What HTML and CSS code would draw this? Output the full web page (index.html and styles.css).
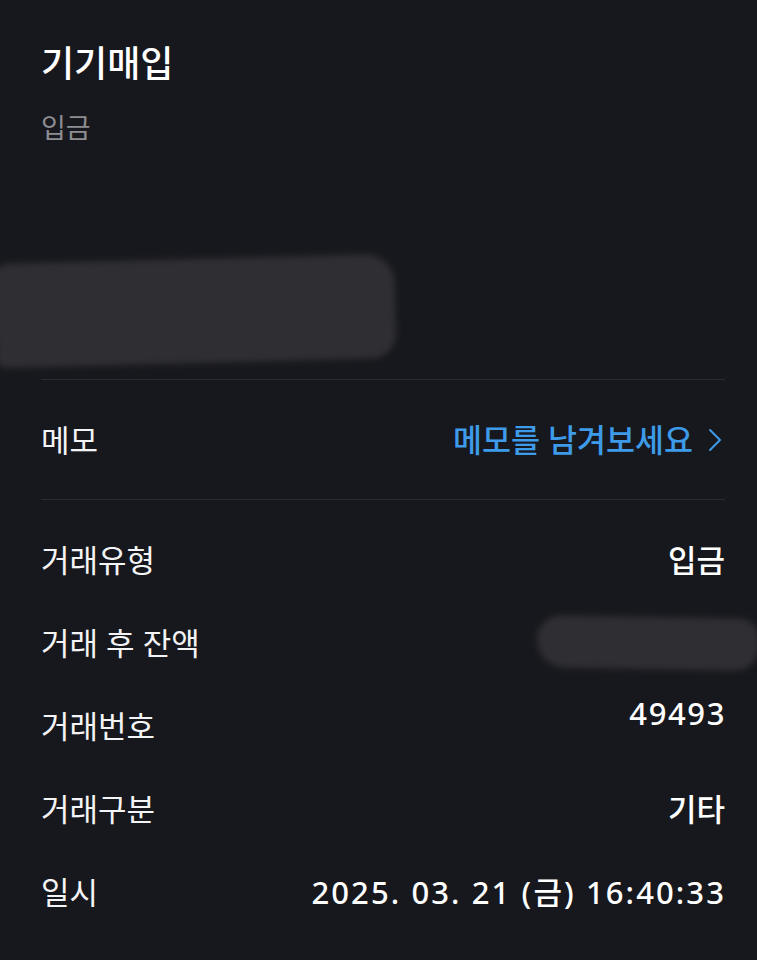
FILE: index.html
```html
<!DOCTYPE html>
<html lang="ko">
<head>
<meta charset="utf-8">
<link rel="stylesheet" href="styles.css">
</head>
<body>
<main class="page">
  <header class="head">
    <h1 class="title">기기매입</h1>
    <p class="subtitle">입금</p>
    <div class="redact redact-amount"></div>
  </header>
  <div class="memo">
    <span class="label">메모</span>
    <a class="memo-link">메모를 남겨보세요
      <svg class="chev" viewBox="0 0 16 26" width="16" height="26"><path d="M3 3 L13 13 L3 23" fill="none" stroke="#3d9be9" stroke-width="2" stroke-linecap="round" stroke-linejoin="round"/></svg>
    </a>
  </div>
  <ul class="rows">
    <li class="row"><span class="label">거래유형</span><span class="value">입금</span></li>
    <li class="row"><span class="label">거래 후 잔액</span><div class="redact redact-balance"></div></li>
    <li class="row"><span class="label">거래번호</span><span class="value num value-high">49493</span></li>
    <li class="row"><span class="label">거래구분</span><span class="value">기타</span></li>
    <li class="row"><span class="label">일시</span><span class="value num date">2025. 03. 21 (금) 16:40:33</span></li>
  </ul>
</main>
</body>
</html>
```
FILE: styles.css
```css
html, body {
  margin: 0;
  padding: 0;
  background: #17181d;
}
body {
  font-family: "Noto Sans", "Noto Sans CJK KR", sans-serif;
  color: #f4f4f6;
  overflow: hidden;
}
.page {
  padding: 0 32px 0 41px;
}
.head {
  padding-top: 40px;
}
.title {
  margin: 0;
  font-size: 36px;
  line-height: 48px;
  font-weight: 500;
  color: #ffffff;
}
.subtitle {
  margin: 20px 0 0;
  font-size: 27px;
  line-height: 40px;
  color: #8d8d92;
}
.redact {
  background: #2f2f33;
  filter: blur(3px);
}
.redact-amount {
  margin: 111px 0 16px -46px;
  width: 400px;
  height: 104px;
  border-radius: 14px 28px 24px 10px;
  transform: rotate(-1.5deg);
}
.memo {
  border-top: 1px solid #2b2c31;
  border-bottom: 1px solid #2b2c31;
  height: 119px;
  display: flex;
  align-items: center;
  justify-content: space-between;
}
.label {
  font-size: 31px;
  line-height: 42px;
  color: #f4f4f6;
}
.memo-link {
  display: flex;
  align-items: center;
  gap: 14px;
  font-size: 31.5px;
  line-height: 42px;
  color: #3d9be9;
  font-weight: 500;
}
.chev {
  display: block;
  margin-right: 2px;
}
.rows {
  list-style: none;
  margin: 0;
  padding: 18px 0 0;
}
.row {
  height: 83px;
  display: flex;
  align-items: center;
  justify-content: space-between;
}
.value {
  font-size: 31px;
  line-height: 42px;
  font-weight: 500;
  color: #ffffff;
}
.num {
  letter-spacing: 1.6px;
  margin-right: -1px;
}
.date {
  letter-spacing: 2.1px;
}
.value-high {
  margin-bottom: 26px;
}
.redact-balance {
  width: 222px;
  height: 52px;
  margin-right: -34px;
  border-radius: 24px 20px 24px 28px;
  transform: rotate(1deg);
}
```
